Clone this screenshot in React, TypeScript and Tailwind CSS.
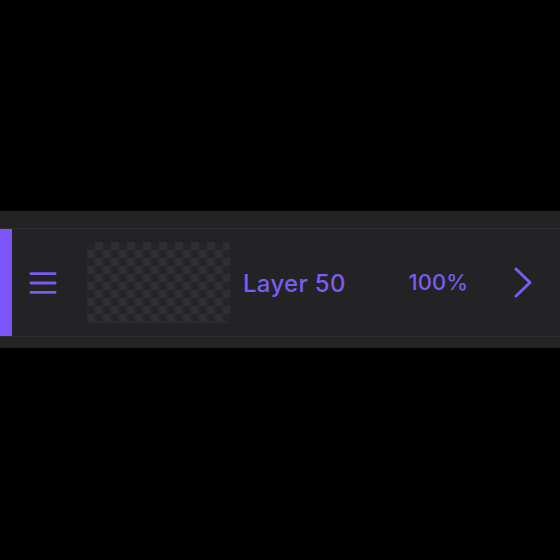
export default function App() {
  return (
    <div className="h-[560px] w-[560px] bg-black" style={{ fontFamily: 'Inter, "Noto Sans", sans-serif' }}>
      <div className="h-[211px]" />
      <section className="bg-[#232224] pt-[17px] pb-[11px]">
        {/* layer row */}
        <div className="border-y border-[#2e2d30]">
          <div className="flex h-[107px] items-center">
            <div className="h-full w-3 bg-[#7c55fb]" />
            <button className="ml-[17px] flex h-[28px] w-[28px] items-center justify-center">
              <svg width="30" height="24" viewBox="0 0 30 24" fill="none" stroke="#7a5cf2" strokeWidth="3" strokeLinecap="round">
                <path d="M2 2h26M2 12h26M2 22h26" />
              </svg>
            </button>
            <div className="ml-[30px] h-[81px] w-[143px] rounded-[3px] bg-[conic-gradient(#2f2e31_25%,#252427_0_50%,#2f2e31_0_75%,#252427_0)] bg-[length:16px_16px]" />
            <span className="ml-[13px] mt-[2px] text-[24px] font-medium tracking-[0.3px] text-[#7a5cf2]">Layer 50</span>
            <span className="ml-auto text-[22px] font-medium text-[#7a5cf2]">100%</span>
            <svg className="ml-[46px] mr-[28px]" width="18" height="31" viewBox="0 0 18 31" fill="none" stroke="#7a5cf2" strokeWidth="3" strokeLinecap="round" strokeLinejoin="round">
              <path d="M2 2l14 13.5L2 29" />
            </svg>
          </div>
        </div>
      </section>
    </div>
  );
}
